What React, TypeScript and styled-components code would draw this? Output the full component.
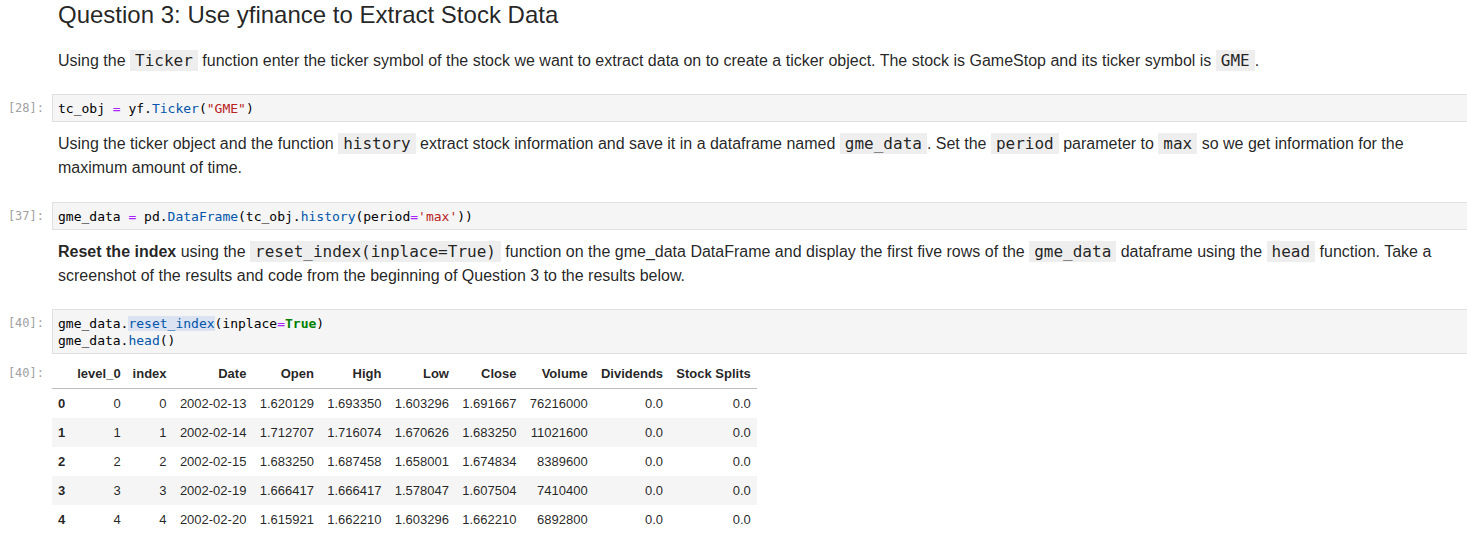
import styled, { createGlobalStyle } from "styled-components";

const GlobalStyle = createGlobalStyle`
  html, body {
    margin: 0;
    padding: 0;
    background: #fff;
    overflow: hidden;
  }
  body {
    font-family: "Liberation Sans", Arial, sans-serif;
    color: rgba(0, 0, 0, 0.87);
  }
`;

const Notebook = styled.div`
  width: 1490px;
  display: flex;
  flex-direction: column;
`;

const Cell = styled.div<{ $gap?: number }>`
  display: flex;
  align-items: flex-start;
  margin-top: ${(p) => p.$gap ?? 0}px;
`;

const Prompt = styled.div<{ $top?: number }>`
  flex: none;
  width: 52px;
  box-sizing: border-box;
  padding-right: 8px;
  padding-top: ${(p) => p.$top ?? 0}px;
  text-align: right;
  font-family: "DejaVu Sans Mono", monospace;
  font-size: 12px;
  line-height: 17px;
  color: #a0a0a0;
  white-space: nowrap;
`;

const Markdown = styled.div`
  flex: none;
  width: 1392px;
  padding-left: 6px;
  box-sizing: border-box;
`;

const Heading = styled.h2`
  margin: 0;
  font-size: 24px;
  font-weight: 400;
  line-height: 30px;
  color: rgba(0, 0, 0, 0.87);
`;

const Para = styled.p`
  margin: 0;
  font-size: 16px;
  line-height: 24px;
  color: rgba(0, 0, 0, 0.87);
`;

const InlineCode = styled.code`
  font-family: "DejaVu Sans Mono", monospace;
  font-size: 16px;
  background: #eeeeee;
  padding: 1px 5px;
  color: rgba(0, 0, 0, 0.87);
`;

const CodeBox = styled.pre`
  flex: 1;
  margin: 0;
  background: #f5f5f5;
  border: 1px solid #e0e0e0;
  padding: 5px 5px 4px;
  font-family: "DejaVu Sans Mono", monospace;
  font-size: 13px;
  line-height: 17px;
  color: #000;
  white-space: pre;
`;

const Op = styled.span`
  color: #aa22ff;
`;
const Prop = styled.span<{ $match?: boolean }>`
  color: #0055aa;
  background: ${(p) => (p.$match ? "#dbe3f3" : "transparent")};
`;
const Str = styled.span`
  color: #ba2121;
`;
const Kw = styled.span`
  color: #008000;
  font-weight: bold;
`;

const OutputArea = styled.div`
  flex: none;
`;

const Table = styled.table`
  border-collapse: collapse;
  font-family: "Liberation Sans", Arial, sans-serif;
  font-size: 13px;
  line-height: 17px;
  color: rgba(0, 0, 0, 0.87);

  th, td {
    padding: 6px;
    text-align: right;
    white-space: nowrap;
  }
  th:nth-child(n + 4), td:nth-child(n + 4) {
    padding-left: 7.3px;
  }
  thead th {
    font-weight: bold;
    border-bottom: 1px solid #bdbdbd;
    vertical-align: bottom;
  }
  tbody th {
    font-weight: bold;
    text-align: left;
  }
  tbody tr:nth-child(even) {
    background: #f5f5f5;
  }
`;

const columns = ["level_0", "index", "Date", "Open", "High", "Low", "Close", "Volume", "Dividends", "Stock Splits"];

const rows = [
  ["0", "0", "2002-02-13", "1.620129", "1.693350", "1.603296", "1.691667", "76216000", "0.0", "0.0"],
  ["1", "1", "2002-02-14", "1.712707", "1.716074", "1.670626", "1.683250", "11021600", "0.0", "0.0"],
  ["2", "2", "2002-02-15", "1.683250", "1.687458", "1.658001", "1.674834", "8389600", "0.0", "0.0"],
  ["3", "3", "2002-02-19", "1.666417", "1.666417", "1.578047", "1.607504", "7410400", "0.0", "0.0"],
  ["4", "4", "2002-02-20", "1.615921", "1.662210", "1.603296", "1.662210", "6892800", "0.0", "0.0"],
];

export default function App() {
  return (
    <>
      <GlobalStyle />
      <Notebook>
        <Cell>
          <Prompt />
          <Markdown>
            <Heading>Question 3: Use yfinance to Extract Stock Data</Heading>
          </Markdown>
        </Cell>

        <Cell $gap={19}>
          <Prompt />
          <Markdown>
            <Para>
              Using the <InlineCode>Ticker</InlineCode> function enter the ticker symbol of the stock we want to
              extract data on to create a ticker object. The stock is GameStop and its ticker symbol is{" "}
              <InlineCode>GME</InlineCode>.
            </Para>
          </Markdown>
        </Cell>

        <Cell $gap={21}>
          <Prompt $top={6}>[28]:</Prompt>
          <CodeBox>
            tc_obj <Op>=</Op> yf.<Prop>Ticker</Prop>(<Str>"GME"</Str>)
          </CodeBox>
        </Cell>

        <Cell $gap={10}>
          <Prompt />
          <Markdown>
            <Para>
              Using the ticker object and the function <InlineCode>history</InlineCode> extract stock information
              and save it in a dataframe named <InlineCode>gme_data</InlineCode>. Set the{" "}
              <InlineCode>period</InlineCode> parameter to <InlineCode>max</InlineCode> so we get information for
              the maximum amount of time.
            </Para>
          </Markdown>
        </Cell>

        <Cell $gap={22}>
          <Prompt $top={6}>[37]:</Prompt>
          <CodeBox>
            gme_data <Op>=</Op> pd.<Prop>DataFrame</Prop>(tc_obj.<Prop>history</Prop>(period<Op>=</Op>
            <Str>'max'</Str>))
          </CodeBox>
        </Cell>

        <Cell $gap={10}>
          <Prompt />
          <Markdown>
            <Para>
              <b>Reset the index</b> using the <InlineCode>reset_index(inplace=True)</InlineCode> function on the
              gme_data DataFrame and display the first five rows of the <InlineCode>gme_data</InlineCode> dataframe
              using the <InlineCode>head</InlineCode> function. Take a screenshot of the results and code from the
              beginning of Question 3 to the results below.
            </Para>
          </Markdown>
        </Cell>

        <Cell $gap={21}>
          <Prompt $top={6}>[40]:</Prompt>
          <CodeBox>
            gme_data.<Prop $match>reset_index</Prop>(inplace<Op>=</Op><Kw>True</Kw>){"\n"}gme_data.
            <Prop>head</Prop>()
          </CodeBox>
        </Cell>

        <Cell $gap={5}>
          <Prompt $top={6}>[40]:</Prompt>
          <OutputArea>
            <Table>
              <thead>
                <tr>
                  <th></th>
                  {columns.map((c) => (
                    <th key={c}>{c}</th>
                  ))}
                </tr>
              </thead>
              <tbody>
                {rows.map((r, i) => (
                  <tr key={i}>
                    <th>{i}</th>
                    {r.map((v, j) => (
                      <td key={j}>{v}</td>
                    ))}
                  </tr>
                ))}
              </tbody>
            </Table>
          </OutputArea>
        </Cell>
      </Notebook>
    </>
  );
}
